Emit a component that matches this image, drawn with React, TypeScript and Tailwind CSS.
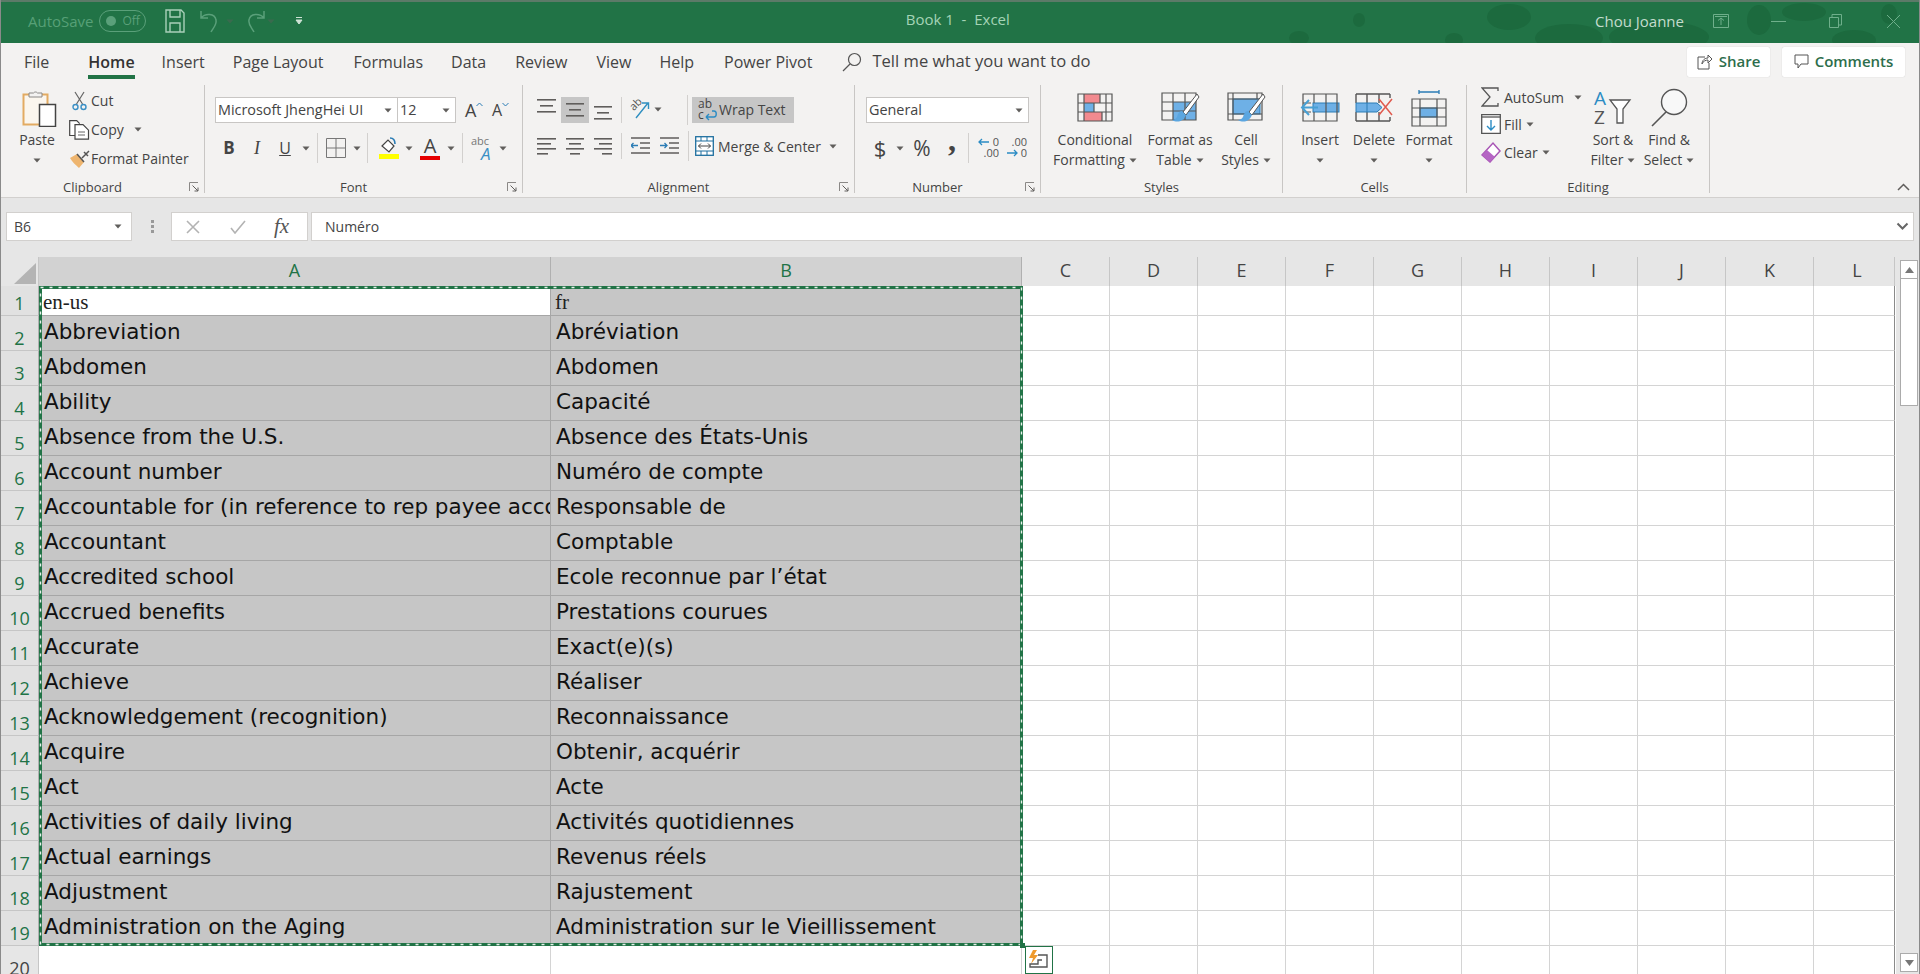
import React from "react";

const rows: [string, string][] = [
  ["Abbreviation", "Abréviation"],
  ["Abdomen", "Abdomen"],
  ["Ability", "Capacité"],
  ["Absence from the U.S.", "Absence des États-Unis"],
  ["Account number", "Numéro de compte"],
  ["Accountable for (in reference to rep payee account)", "Responsable de"],
  ["Accountant", "Comptable"],
  ["Accredited school", "Ecole reconnue par l’état"],
  ["Accrued benefits", "Prestations courues"],
  ["Accurate", "Exact(e)(s)"],
  ["Achieve", "Réaliser"],
  ["Acknowledgement (recognition)", "Reconnaissance"],
  ["Acquire", "Obtenir, acquérir"],
  ["Act", "Acte"],
  ["Activities of daily living", "Activités quotidiennes"],
  ["Actual earnings", "Revenus réels"],
  ["Adjustment", "Rajustement"],
  ["Administration on the Aging", "Administration sur le Vieillissement"],
];
const blankCols = ["C", "D", "E", "F", "G", "H", "I", "J", "K", "L"];

function Caret({ className = "" }: { className?: string }) {
  return (
    <svg width="8" height="5" viewBox="0 0 8 5" className={`shrink-0 ${className}`}>
      <path d="M0.5 0.5h7L4 4.5z" fill="#605e5c" />
    </svg>
  );
}
function Sep({ className = "" }: { className?: string }) {
  return <div className={`w-px shrink-0 bg-[#d2d0ce] ${className}`} />;
}
function VSep() {
  return <div className="mt-[5px] h-[108px] w-px shrink-0 bg-[#c8c6c4]" />;
}
function Launcher() {
  return (
    <svg width="11" height="11" viewBox="0 0 11 11" className="mr-[4px] shrink-0">
      <path d="M0.5 9V0.5H9" stroke="#8a8886" fill="none" />
      <path d="M3.5 3.5L9 9M9 5.5V9H5.5" stroke="#605e5c" fill="none" />
    </svg>
  );
}
function Group({ w, label, launcher, children }: { w: string; label: string; launcher?: boolean; children: React.ReactNode }) {
  return (
    <div className={`${w} flex h-full shrink-0 flex-col`}>
      <div className="mt-[5px] h-[93px]">{children}</div>
      <div className="flex h-[20px] items-center text-[13px] leading-[20px] text-[#444]">
        <div className="flex-1 text-center">{label}</div>
        {launcher ? <div className="flex w-[20px] justify-end"><Launcher /></div> : null}
      </div>
    </div>
  );
}
function BigBtn({ w, icon, l1, l2, className = "" }: { w: string; icon: React.ReactNode; l1: string; l2?: string; className?: string }) {
  return (
    <div className={`${w} ${className} flex shrink-0 flex-col items-center text-[14px] leading-[20px] text-[#444]`}>
      <div className="flex h-[45px] w-full items-center justify-center">{icon}</div>
      <div className="h-[20px] whitespace-nowrap">{l1}</div>
      <div className="flex h-[20px] items-center gap-[4px] whitespace-nowrap">
        {l2 ? <span>{l2}</span> : null}
        <Caret />
      </div>
    </div>
  );
}

function PasteIcon() {
  return (
    <svg width="36" height="38" viewBox="0 0 36 38" className="ml-[5px]">
      <rect x="1.5" y="5.5" width="24" height="30" fill="#fbf6ee" stroke="#e3ab62" strokeWidth="2" />
      <path d="M7 8V4h4.5a2.5 2.5 0 0 1 4 0H20v4z" fill="#f3f2f1" stroke="#8a8886" />
      <rect x="17.5" y="15.5" width="16" height="22" fill="#fff" stroke="#444" strokeWidth="1.5" />
    </svg>
  );
}
function CutIcon() {
  return (
    <svg width="15" height="20" viewBox="0 0 15 20">
      <path d="M3 1l7.5 12M12 1L4.5 13" stroke="#666" strokeWidth="1.2" fill="none" />
      <circle cx="3.5" cy="16" r="2.5" fill="none" stroke="#3a8fc4" strokeWidth="1.4" />
      <circle cx="11.5" cy="16" r="2.5" fill="none" stroke="#3a8fc4" strokeWidth="1.4" />
    </svg>
  );
}
function CopyIcon() {
  return (
    <svg width="21" height="20" viewBox="0 0 21 20">
      <path d="M6 15.5H.7V.7h7l3 3" fill="#fff" stroke="#444" strokeWidth="1.2" />
      <path d="M6 4.7h8l5.5 5.5v9H6z" fill="#fff" stroke="#444" strokeWidth="1.2" />
      <path d="M9 12h7M9 15h7" stroke="#666" />
    </svg>
  );
}
function PainterIcon() {
  return (
    <svg width="22" height="20" viewBox="0 0 22 20">
      <path d="M1 9l7-4 7 8-5 6C7 16 3 13 1 9z" fill="#eeb56f" />
      <path d="M8 5l7 8M13 9l7-7M15 3l4 4" stroke="#555" strokeWidth="1.5" fill="none" />
    </svg>
  );
}
function Lines({ w, ys, widths }: { w: number; ys: number[]; widths?: [number, number][] }) {
  const h = Math.max(...ys) + 2;
  return (
    <svg width={w} height={h} viewBox={`0 0 ${w} ${h}`} className="shrink-0">
      {ys.map((y, i) => {
        const [a, b] = widths ? widths[i] : [0, w];
        return <rect key={i} x={a} y={y} width={b - a} height="1.6" fill="#605e5c" />;
      })}
    </svg>
  );
}
function BordersIcon() {
  return (
    <svg width="20" height="20" viewBox="0 0 20 20">
      <path d="M.5.5h19v19H.5zM10 .5v19M.5 10h19" fill="none" stroke="#777" />
    </svg>
  );
}
function FillIcon() {
  return (
    <svg width="20" height="22" viewBox="0 0 20 22">
      <path d="M3 9l6-6 6 6-5 6z" fill="#fff" stroke="#444" strokeWidth="1.2" />
      <path d="M11 1c3 0 5 2 5 6" stroke="#2b7cb5" strokeWidth="1.6" fill="none" />
      <rect x="0" y="17" width="20" height="5" fill="#ffff00" />
    </svg>
  );
}
function ColorIcon() {
  return (
    <div className="flex h-[24px] w-[20px] flex-col items-center">
      <span className="h-[19px] text-[20px] leading-[20px] text-[#444]">A</span>
      <div className="mt-[1px] h-[5px] w-[20px] bg-[#e60000]" />
    </div>
  );
}
function AbcIcon() {
  return (
    <div className="flex h-[26px] w-[24px] flex-col">
      <span className="h-[12px] text-[11px] leading-[12px] text-[#777]">abc</span>
      <span className="ml-[10px] h-[14px] text-[17px] italic leading-[14px] text-[#3a8fc4]">A</span>
    </div>
  );
}
function OrientIcon() {
  return (
    <div className="relative h-[21px] w-[21px]">
      <span className="absolute -left-[1px] -top-[2px] -rotate-45 text-[11px] leading-[14px] text-[#555]">ab</span>
      <svg width="21" height="21" viewBox="0 0 21 21" className="absolute left-0 top-0">
        <path d="M6 19L18 4M12 4h6.5v6" stroke="#2f8fc0" strokeWidth="1.4" fill="none" />
      </svg>
    </div>
  );
}
function IndentIcon({ right }: { right?: boolean }) {
  return (
    <svg width="19" height="18" viewBox="0 0 19 18">
      <path d="M0 1h19M9 6h10M9 11h10M0 16h19" stroke="#605e5c" strokeWidth="1.4" />
      {right ? (
        <path d="M0 8.5h7M4.5 6l2.5 2.5L4.5 11" stroke="#2b7cb5" fill="none" strokeWidth="1.3" />
      ) : (
        <path d="M7 8.5H0M2.5 6L0 8.5 2.5 11" stroke="#2b7cb5" fill="none" strokeWidth="1.3" />
      )}
    </svg>
  );
}
function WrapIcon() {
  return (
    <div className="relative flex h-[24px] w-[20px] flex-col text-[12px] leading-[11px] text-[#444]">
      <span>ab</span>
      <span>c</span>
      <svg width="13" height="12" viewBox="0 0 13 12" className="absolute bottom-[1px] right-0">
        <path d="M1 8h8c3 0 3-6 0-6H7M1 8l3-3M1 8l3 3" stroke="#2b8cc4" strokeWidth="1.4" fill="none" />
      </svg>
    </div>
  );
}
function MergeIcon() {
  return (
    <svg width="19" height="20" viewBox="0 0 19 20">
      <rect x=".7" y=".7" width="17.6" height="18.6" fill="#fff" stroke="#1f6f9f" strokeWidth="1.3" />
      <path d="M.7 5h17.6M.7 15h17.6M6 .7V5M12 .7V5M6 15v4M12 15v4" stroke="#1f6f9f" />
      <path d="M3.5 10h12M6 7.5L3.5 10 6 12.5M13 7.5l2.5 2.5-2.5 2.5" stroke="#444" fill="none" />
    </svg>
  );
}
function DecIcon({ inc }: { inc?: boolean }) {
  return (
    <div className="relative flex h-[24px] w-[21px] flex-col items-end text-[11px] leading-[11px] text-[#555]">
      <span>{inc ? "0" : ".00"}</span>
      <span>{inc ? ".00" : "0"}</span>
      <svg width="12" height="8" viewBox="0 0 12 8" className={`absolute ${inc ? "left-0 top-[2px]" : "left-0 top-[13px]"}`}>
        {inc ? (
          <path d="M11 4H1M4 1L1 4l3 3" stroke="#2b8cc4" strokeWidth="1.3" fill="none" />
        ) : (
          <path d="M1 4h10M8 1l3 3-3 3" stroke="#2b8cc4" strokeWidth="1.3" fill="none" />
        )}
      </svg>
    </div>
  );
}
const gridStroke = "#555";
function CondIcon() {
  return (
    <svg width="36" height="29" viewBox="0 0 36 29">
      <rect x="7" y="1" width="16" height="9" fill="#f28a8f" />
      <rect x="7" y="10" width="10" height="9" fill="#6eb0e6" />
      <rect x="7" y="19" width="18" height="9" fill="#f28a8f" />
      <path d="M1 1h34v27H1zM1 10h34M1 19h34M7 1v27M23 1v9M17 10v9M25 19v9M29 1v27" fill="none" stroke={gridStroke} strokeWidth="1.2" />
    </svg>
  );
}
function Brush() {
  return (
    <>
      <path d="M36 2L22 20l3 3L38 5z" fill="#fff" stroke="#555" />
      <path d="M21 19c-3 0-4 3-5 6-1 2-3 3-5 3 5 3 11 2 14-5z" fill="#5ba6e0" />
    </>
  );
}
function TableIcon() {
  return (
    <svg width="39" height="31" viewBox="0 0 39 31">
      <rect x="12" y="10" width="23" height="18" fill="#6eb0e6" />
      <path d="M1 1h34v27H1zM1 10h34M1 19h34M12 1v27M24 1v27" fill="none" stroke={gridStroke} strokeWidth="1.2" />
      <Brush />
    </svg>
  );
}
function StylesIcon() {
  return (
    <svg width="39" height="31" viewBox="0 0 39 31">
      <rect x="6" y="7" width="27" height="15" fill="#6eb0e6" stroke="#2b7cb5" />
      <path d="M1 1h34v27H1zM1 7h34M1 22h34M6 1v27M30 1v6" fill="none" stroke={gridStroke} strokeWidth="1.2" />
      <Brush />
    </svg>
  );
}
function InsertIcon() {
  return (
    <svg width="40" height="29" viewBox="0 0 40 29">
      <rect x="13" y="10" width="26" height="9" fill="#6eb0e6" stroke="#2b7cb5" />
      <path d="M3 1h34v27H3zM3 10h8M3 19h8M14 1v9M14 19v9M26 1v27" fill="none" stroke={gridStroke} strokeWidth="1.2" />
      <path d="M18 14.5H2M9 7l-7 7.5L9 22" fill="none" stroke="#47a0d4" strokeWidth="2" />
    </svg>
  );
}
function DeleteIcon() {
  return (
    <svg width="38" height="29" viewBox="0 0 38 29">
      <path d="M1 1h34M1 28h34M1 1v9M1 19v9M12 1v27M24 1v9M24 19v9M35 1v4M35 24v4" fill="none" stroke={gridStroke} strokeWidth="1.4" />
      <path d="M1 10h21l5 4.5-5 4.5H1z" fill="#6eb0e6" stroke="#2b7cb5" />
      <path d="M12 10v9" stroke="#2b7cb5" />
      <path d="M24 6l13 16M37 6L24 22" stroke="#e05a4e" strokeWidth="1.5" />
    </svg>
  );
}
function FormatIcon() {
  return (
    <svg width="37" height="38" viewBox="0 0 37 38">
      <path d="M8 3h20M8 1v4M28 1v4" stroke="#2b7cb5" strokeWidth="1.3" fill="none" />
      <rect x="9" y="19" width="17" height="9" fill="#6eb0e6" stroke="#2b7cb5" />
      <path d="M1 10h34v27H1zM1 19h34M1 28h34M9 10v27M26 10v27" fill="none" stroke={gridStroke} strokeWidth="1.2" />
    </svg>
  );
}
function SortIcon() {
  return (
    <div className="flex h-[38px] w-[38px]">
      <div className="flex w-[14px] flex-col text-[19px] leading-[19px]">
        <span className="text-[#2b8cc4]">A</span>
        <span className="text-[#555]">Z</span>
      </div>
      <svg width="24" height="30" viewBox="0 0 24 30" className="mt-[8px]">
        <path d="M2 3h20l-7 9v14H9V12z" fill="#fff" stroke="#555" strokeWidth="1.3" />
      </svg>
    </div>
  );
}
function FindIcon() {
  return (
    <svg width="38" height="40" viewBox="0 0 38 40">
      <circle cx="24" cy="14" r="12.5" fill="#f8f8f8" stroke="#555" strokeWidth="1.4" />
      <path d="M16 24L2 38" stroke="#555" strokeWidth="1.6" />
    </svg>
  );
}

function TopBar() {
  return (
    <div className="relative flex h-[43px] shrink-0 items-center overflow-hidden border-t-[2px] border-[#5c7a68] bg-[#217346]">
      <svg width="640" height="41" viewBox="0 0 640 41" className="absolute right-0 top-0">
        <g fill="#1c6a3e">
          <ellipse cx="80" cy="18" rx="6" ry="7" />
          <ellipse cx="230" cy="15" rx="22" ry="13" />
          <ellipse cx="290" cy="36" rx="34" ry="14" />
          <ellipse cx="380" cy="35" rx="50" ry="16" />
          <ellipse cx="480" cy="18" rx="12" ry="15" />
          <ellipse cx="525" cy="10" rx="22" ry="9" />
          <ellipse cx="575" cy="38" rx="22" ry="10" />
          <ellipse cx="610" cy="12" rx="8" ry="10" />
          <ellipse cx="175" cy="38" rx="9" ry="7" />
          <ellipse cx="20" cy="36" rx="10" ry="7" />
        </g>
      </svg>
      <div className="relative flex h-full w-full items-center pb-[3px]">
        <span className="ml-[27px] text-[15px] text-[#57a077]">AutoSave</span>
        <div className="ml-[5px] flex h-[22px] w-[47px] items-center rounded-full border border-[#5aa07a]">
          <div className="ml-[6px] h-[10px] w-[10px] rounded-full bg-[#5aa07a]" />
          <span className="ml-[7px] text-[12px] text-[#5aa07a]">Off</span>
        </div>
        <svg width="20" height="24" viewBox="0 0 20 24" className="ml-[19px]">
          <path d="M1 1h15l3 3v19H1zM5 1v7h10V1M5 23v-9h10v9" fill="none" stroke="#a9d0b9" strokeWidth="1.4" />
        </svg>
        <svg width="26" height="26" viewBox="0 0 26 26" className="ml-[14px]">
          <path d="M2 3v7h7M2 10c4-5 14-5 15 2 1 5-3 8-5 12" fill="none" stroke="#5aa07a" strokeWidth="1.5" />
        </svg>
        <Caret className="ml-[1px] opacity-40" />
        <svg width="26" height="26" viewBox="0 0 26 26" className="ml-[6px]">
          <path d="M24 3v7h-7M24 10c-4-5-14-5-15 2-1 5 3 8 5 12" fill="none" stroke="#5aa07a" strokeWidth="1.5" />
        </svg>
        <Caret className="ml-[1px] opacity-40" />
        <svg width="8" height="10" viewBox="0 0 8 10" className="ml-[20px]">
          <path d="M1 1.5h6M1 4h6L4 8z" stroke="#cfe3d6" fill="#cfe3d6" />
        </svg>
        <div className="mb-[3px] flex-1 pl-[18px] text-center text-[15px] text-[#a4d4b6]">Book 1&nbsp; -&nbsp; Excel</div>
        <span className="text-[15px] text-[#c4dccd]">Chou Joanne</span>
        <svg width="16" height="14" viewBox="0 0 16 14" className="ml-[29px]">
          <path d="M.5.5h15v13H.5zM8 11V4M5 6.5L8 4l3 2.5M2 2.5h12" fill="none" stroke="#6faf8b" />
        </svg>
        <div className="ml-[42px] h-px w-[15px] bg-[#6faf8b]" />
        <svg width="13" height="14" viewBox="0 0 13 14" className="ml-[43px]">
          <path d="M.5 3.5h9v10h-9zM3 3V.5h9.5V11H10" fill="none" stroke="#6faf8b" />
        </svg>
        <svg width="15" height="15" viewBox="0 0 15 15" className="ml-[44px] mr-[18px]">
          <path d="M1 1l13 13M14 1L1 14" stroke="#6faf8b" />
        </svg>
      </div>
    </div>
  );
}

function Tabs() {
  return (
    <div className="flex h-[37px] shrink-0 items-center bg-[#f3f2f1] text-[16px] text-[#444]">
      <span className="ml-[23px]">File</span>
      <div className="relative ml-[39px] flex h-[37px] items-center font-semibold text-[#333]">
        Home
        <div className="absolute bottom-[1px] left-0 right-0 h-[4px] bg-[#217346]" />
      </div>
      <span className="ml-[27px]">Insert</span>
      <span className="ml-[28px]">Page Layout</span>
      <span className="ml-[30px]">Formulas</span>
      <span className="ml-[28px]">Data</span>
      <span className="ml-[29px]">Review</span>
      <span className="ml-[29px]">View</span>
      <span className="ml-[28px]">Help</span>
      <span className="ml-[30px]">Power Pivot</span>
      <svg width="20" height="20" viewBox="0 0 20 20" className="ml-[30px]">
        <circle cx="12.5" cy="7.5" r="6" fill="none" stroke="#555" strokeWidth="1.2" />
        <path d="M8 12l-7 7" stroke="#555" strokeWidth="1.2" />
      </svg>
      <span className="ml-[10px] text-[16.6px]">Tell me what you want to do</span>
      <div className="ml-auto flex h-[30px] w-[83px] items-center justify-center gap-[6px] rounded-[2px] bg-white text-[15px] font-semibold text-[#2d6e4c] shadow-[0_0_1px_#bbb]">
        <svg width="16" height="16" viewBox="0 0 16 16">
          <path d="M8 3H1v12h11V9M5 10c0-4 3-6 6-6V1l4 4-4 4V6c-2 0-5 1-6 4z" fill="none" stroke="#555" />
        </svg>
        Share
      </div>
      <div className="ml-[12px] mr-[14px] flex h-[30px] w-[123px] items-center justify-center gap-[6px] rounded-[2px] bg-white text-[15px] font-semibold text-[#2d6e4c] shadow-[0_0_1px_#bbb]">
        <svg width="15" height="15" viewBox="0 0 15 15">
          <path d="M1 1h13v9H7l-3 4v-4H1z" fill="none" stroke="#555" />
        </svg>
        Comments
      </div>
    </div>
  );
}

function SmallRow({ icon, text, caret }: { icon: React.ReactNode; text: string; caret?: boolean }) {
  return (
    <div className="flex h-[29px] items-center whitespace-nowrap text-[14px] text-[#444]">
      <div className="flex w-[23px] justify-center">{icon}</div>
      <span>{text}</span>
      {caret ? <Caret className="ml-[10px]" /> : null}
    </div>
  );
}
function Combo({ w, text, className = "" }: { w: string; text: string; className?: string }) {
  return (
    <div className={`${w} ${className} flex h-[26px] items-center justify-between border border-[#c8c6c4] bg-white pl-[2px] pr-[5px] text-[14.4px] text-[#444]`}>
      <span className="whitespace-nowrap">{text}</span>
      <Caret />
    </div>
  );
}

function Ribbon() {
  return (
    <div className="flex h-[118px] shrink-0 border-b border-[#d2d0ce] bg-[#f3f2f1]">
      <Group w="w-[203px]" label="Clipboard" launcher>
        <div className="flex">
          <BigBtn w="w-[68px]" className="ml-[2px]" icon={<PasteIcon />} l1="Paste" />
          <div className="-ml-[3px] pt-[1px]">
            <SmallRow icon={<CutIcon />} text="Cut" />
            <SmallRow icon={<CopyIcon />} text="Copy" caret />
            <SmallRow icon={<PainterIcon />} text="Format Painter" />
          </div>
        </div>
      </Group>
      <VSep />
      <Group w="w-[317px]" label="Font" launcher>
        <div className="pl-[10px] pt-[12px]">
          <div className="flex h-[26px] items-center text-[#444]">
            <Combo w="w-[183px]" text="Microsoft JhengHei UI" />
            <Combo w="w-[59px]" text="12" className="-ml-px" />
            <div className="ml-[9px] flex w-[18px] items-start">
              <span className="text-[18px] leading-[22px]">A</span>
              <svg width="7" height="5" viewBox="0 0 7 5" className="mt-[3px] shrink-0"><path d="M.5 4L3.5 1l3 3" stroke="#2b7cb5" fill="none" /></svg>
            </div>
            <div className="ml-[9px] flex w-[18px] items-start">
              <span className="text-[16px] leading-[22px]">A</span>
              <svg width="7" height="5" viewBox="0 0 7 5" className="mt-[3px] shrink-0"><path d="M.5 1L3.5 4l3-3" stroke="#2b7cb5" fill="none" /></svg>
            </div>
          </div>
          <div className="mt-[12px] flex h-[26px] items-center text-[#444]">
            <div className="ml-[4px] w-[20px] text-center text-[17px] font-bold">B</div>
            <div className="ml-[8px] w-[20px] text-center font-[Liberation_Serif,serif] text-[18px] italic">I</div>
            <div className="ml-[8px] w-[20px] text-center text-[16px] underline">U</div>
            <Caret className="ml-[7px]" />
            <Sep className="ml-[7px] h-[30px]" />
            <div className="ml-[8px]"><BordersIcon /></div>
            <Caret className="ml-[7px]" />
            <Sep className="ml-[6px] h-[30px]" />
            <div className="ml-[11px]"><FillIcon /></div>
            <Caret className="ml-[6px]" />
            <div className="ml-[7px]"><ColorIcon /></div>
            <Caret className="ml-[7px]" />
            <Sep className="ml-[7px] h-[30px]" />
            <div className="ml-[8px]"><AbcIcon /></div>
            <Caret className="ml-[4px]" />
          </div>
        </div>
      </Group>
      <VSep />
      <Group w="w-[331px]" label="Alignment" launcher>
        <div className="pl-[14px] pt-[11px]">
          <div className="flex h-[27px] items-center">
            <div className="flex h-[26px] w-[20px] items-start pt-[2px]"><Lines w={19} ys={[0, 6, 12]} widths={[[0, 19], [3, 16], [0, 19]]} /></div>
            <div className="ml-[4px] flex h-[26px] w-[28px] items-center justify-center bg-[#c6c6c6]"><Lines w={18} ys={[0, 6, 12]} widths={[[0, 18], [3, 15], [0, 18]]} /></div>
            <div className="ml-[5px] flex h-[26px] w-[18px] items-end pb-[3px]"><Lines w={18} ys={[0, 6, 12]} widths={[[0, 18], [3, 15], [0, 18]]} /></div>
            <Sep className="ml-[9px] h-[26px]" />
            <div className="ml-[8px]"><OrientIcon /></div>
            <Caret className="ml-[3px]" />
            <Sep className="ml-[25px] h-[30px]" />
            <div className="ml-[4px] flex h-[26px] w-[102px] items-center gap-[1px] bg-[#c6c6c6] pl-[6px] text-[14px] text-[#444]">
              <WrapIcon />
              <span>Wrap Text</span>
            </div>
          </div>
          <div className="mt-[10px] flex h-[26px] items-center">
            <Lines w={19} ys={[0, 5, 10, 15]} widths={[[0, 19], [0, 14], [0, 19], [0, 11]]} />
            <div className="ml-[10px]"><Lines w={18} ys={[0, 5, 10, 15]} widths={[[0, 18], [3, 15], [0, 18], [4, 14]]} /></div>
            <div className="ml-[10px]"><Lines w={18} ys={[0, 5, 10, 15]} widths={[[0, 18], [5, 18], [0, 18], [8, 18]]} /></div>
            <Sep className="ml-[9px] h-[26px]" />
            <div className="ml-[9px]"><IndentIcon /></div>
            <div className="ml-[10px]"><IndentIcon right /></div>
            <Sep className="ml-[9px] h-[30px]" />
            <div className="ml-[6px] shrink-0"><MergeIcon /></div>
            <span className="ml-[4px] whitespace-nowrap text-[14px] text-[#444]">Merge &amp; Center</span>
            <Caret className="ml-[8px]" />
          </div>
        </div>
      </Group>
      <VSep />
      <Group w="w-[185px]" label="Number" launcher>
        <div className="pl-[11px] pt-[12px]">
          <Combo w="w-[163px]" text="General" />
          <div className="mt-[12px] flex h-[26px] items-center text-[#444]">
            <span className="ml-[7px] w-[14px] text-center text-[22px] leading-[26px]">$</span>
            <Caret className="ml-[9px]" />
            <span className="ml-[6px] w-[24px] text-center text-[21px] leading-[26px]">%</span>
            <span className="ml-[13px] w-[10px] -translate-y-[8px] text-center font-[Liberation_Serif,serif] text-[32px] font-bold leading-[22px]">,</span>
            <Sep className="ml-[11px] h-[30px]" />
            <div className="ml-[9px]"><DecIcon inc /></div>
            <div className="ml-[7px]"><DecIcon /></div>
          </div>
        </div>
      </Group>
      <VSep />
      <Group w="w-[241px]" label="Styles">
        <div className="flex pl-[6px]">
          <BigBtn w="w-[96px]" icon={<CondIcon />} l1="Conditional" l2="Formatting" />
          <BigBtn w="w-[70px]" className="ml-[2px]" icon={<TableIcon />} l1="Format as" l2="Table" />
          <BigBtn w="w-[62px]" icon={<StylesIcon />} l1="Cell" l2="Styles" />
        </div>
      </Group>
      <VSep />
      <Group w="w-[183px]" label="Cells">
        <div className="flex pl-[10px]">
          <BigBtn w="w-[54px]" icon={<InsertIcon />} l1="Insert" />
          <BigBtn w="w-[54px]" icon={<DeleteIcon />} l1="Delete" />
          <BigBtn w="w-[56px]" icon={<FormatIcon />} l1="Format" />
        </div>
      </Group>
      <VSep />
      <Group w="w-[242px]" label="Editing">
        <div className="flex">
          <div className="-mt-[1px] w-[119px] pl-[14px] text-[14px] text-[#444]">
            <div className="flex h-[26px] items-center">
              <svg width="19" height="20" viewBox="0 0 19 20" className="shrink-0"><path d="M17 4V1H1l8 9-8 9h16v-3" fill="none" stroke="#555" strokeWidth="1.3" /></svg>
              <span className="ml-[4px]">AutoSum</span>
              <Caret className="ml-[10px]" />
            </div>
            <div className="flex h-[28px] items-center">
              <svg width="20" height="20" viewBox="0 0 20 20" className="shrink-0">
                <path d="M.7.7h18.6v18.6H.7z" fill="#fff" stroke="#555" strokeWidth="1.3" />
                <path d="M.7 3h18.6" stroke="#555" strokeWidth="1.3" />
                <path d="M10 6v10M6 12l4 4 4-4" stroke="#2b8cc4" strokeWidth="1.4" fill="none" />
              </svg>
              <span className="ml-[3px]">Fill</span>
              <Caret className="ml-[4px]" />
            </div>
            <div className="flex h-[28px] items-center">
              <svg width="20" height="22" viewBox="0 0 20 22" className="shrink-0">
                <path d="M1 14L12 2l7 8L9 21z" fill="#fff" stroke="#a855b5" strokeWidth="1.5" />
                <path d="M1 14l5-5 8 7-5 5z" fill="#b565c4" />
              </svg>
              <span className="ml-[3px]">Clear</span>
              <Caret className="ml-[4px]" />
            </div>
          </div>
          <BigBtn w="w-[54px]" icon={<SortIcon />} l1="Sort &" l2="Filter" />
          <BigBtn w="w-[58px]" icon={<FindIcon />} l1="Find &" l2="Select" />
        </div>
      </Group>
      <VSep />
      <div className="flex flex-1 items-end justify-end pb-[6px] pr-[9px]">
        <svg width="13" height="8" viewBox="0 0 13 8"><path d="M1 7l5.5-5.5L12 7" fill="none" stroke="#605e5c" strokeWidth="1.5" /></svg>
      </div>
    </div>
  );
}

function FormulaBar() {
  return (
    <div className="flex h-[59px] shrink-0 bg-[#e6e6e6] pt-[14px]">
      <div className="ml-[5px] flex h-[29px] w-[126px] items-center justify-between border border-[#d2d0ce] bg-white pl-[7px] pr-[9px] text-[14px] text-[#444]">
        B6
        <Caret />
      </div>
      <div className="ml-[18px] flex h-[29px] w-[4px] flex-col items-center justify-center gap-[2px]">
        <div className="h-[3px] w-[3px] bg-[#999]" />
        <div className="h-[3px] w-[3px] bg-[#999]" />
        <div className="h-[3px] w-[3px] bg-[#999]" />
      </div>
      <div className="ml-[17px] flex h-[29px] w-[137px] items-center border border-[#d2d0ce] bg-white">
        <svg width="14" height="14" viewBox="0 0 14 14" className="ml-[14px]"><path d="M1 1l12 12M13 1L1 13" stroke="#b3b3b3" strokeWidth="1.6" /></svg>
        <svg width="16" height="14" viewBox="0 0 16 14" className="ml-[30px]"><path d="M1 8l4 5L15 1" stroke="#b3b3b3" strokeWidth="1.6" fill="none" /></svg>
        <span className="ml-[28px] font-[Liberation_Serif,serif] text-[21px] italic text-[#555]">fx</span>
      </div>
      <div className="ml-[3px] flex h-[29px] w-[1603px] items-center justify-between border border-[#d2d0ce] bg-white pl-[13px] pr-[4px] text-[14px] text-[#444]">
        Numéro
        <svg width="13" height="9" viewBox="0 0 13 9"><path d="M1.5 1.5l5 5 5-5" fill="none" stroke="#666" strokeWidth="2" /></svg>
      </div>
    </div>
  );
}

function Sheet() {
  return (
    <div className="flex min-h-0 flex-1 bg-[#e6e6e6]">
      <div className="w-[1895px] shrink-0">
        <div className="flex h-[29px] text-[18px] leading-[27px]">
          <div className="flex w-[38px] shrink-0 items-end justify-end border-r border-[#c6c6c6] pb-[2px] pr-[2px]">
            <svg width="22" height="21" viewBox="0 0 22 21"><path d="M22 0v21H0z" fill="#b4b4b4" /></svg>
          </div>
          <div className="w-[512px] shrink-0 border-r border-[#b0b0b0] bg-[#d2d2d2] text-center text-[#217346]">A</div>
          <div className="w-[471px] shrink-0 border-r border-[#b0b0b0] bg-[#d2d2d2] text-center text-[#217346]">B</div>
          {blankCols.map((c) => (
            <div key={c} className={`${c === "L" ? "w-[81px] pl-[6px]" : "w-[88px]"} shrink-0 border-r border-[#c6c6c6] text-center text-[#444]`}>{c}</div>
          ))}
        </div>
        <div className="relative bg-white">
          <RowLine n={1} a="en-us" b="fr" first />
          {rows.map((r, i) => (
            <RowLine key={i} n={i + 2} a={r[0]} b={r[1]} />
          ))}
          <div className="flex h-[28px]">
            <div className="flex w-[38px] shrink-0 justify-center overflow-hidden border-r border-[#c6c6c6] bg-[#e6e6e6] pt-[12px] text-[18px] leading-[20px] text-[#444]">20</div>
            <div className="w-[512px] shrink-0 border-r border-[#d4d4d4]" />
            <div className="w-[471px] shrink-0 border-r border-[#d4d4d4]" />
            {blankCols.map((c) => (
              <div key={c} className={`${c === "L" ? "w-[81px] border-r-[#8a8a8a]" : "w-[88px] border-r-[#d4d4d4]"} shrink-0 border-r`} />
            ))}
          </div>
          <div className="absolute left-[38px] top-0 h-[660px] w-[984px]">
            <svg width="984" height="660" viewBox="0 0 984 660">
              <rect x="1.5" y="1.5" width="981" height="657" fill="none" stroke="#217346" strokeWidth="3" />
              <rect x="1.5" y="1.5" width="981" height="657" fill="none" stroke="#e6f0ea" strokeWidth="1.4" strokeDasharray="3 6" />
            </svg>
            <div className="absolute -bottom-[2px] -right-[2px] h-[5px] w-[5px] bg-[#217346]" />
          </div>
          <div className="absolute left-[1024px] top-[660px] flex h-[28px] w-[28px] items-center justify-center border border-[#217346] bg-white">
            <svg width="22" height="22" viewBox="0 0 22 22">
              <path d="M5 1L1 9h4l-2 6 7-9H6l3-5z" fill="#ef9a2d" />
              <path d="M10 6h9v12H2v-3h8V11h4M6 15" fill="none" stroke="#555" strokeWidth="1.4" />
            </svg>
          </div>
        </div>
      </div>
      <div className="ml-[4px] flex w-[18px] shrink-0 flex-col bg-[#e6e6e6] pt-[3px]">
        <div className="flex h-[19px] items-center justify-center border border-[#ababab] bg-white">
          <svg width="9" height="6" viewBox="0 0 9 6"><path d="M0 6l4.5-6L9 6z" fill="#777" /></svg>
        </div>
        <div className="h-[127px] border-x border-b border-[#ababab] bg-white" />
        <div className="flex-1" />
        <div className="mb-[2px] flex h-[19px] items-center justify-center border border-[#ababab] bg-white">
          <svg width="9" height="6" viewBox="0 0 9 6"><path d="M0 0l4.5 6L9 0z" fill="#777" /></svg>
        </div>
      </div>
    </div>
  );
}

function RowLine({ n, a, b, first }: { n: number; a: string; b: string; first?: boolean }) {
  const h = first ? "h-[30px]" : "h-[35px]";
  const serif = "font-[Liberation_Serif,serif] text-[21px] leading-[26px] text-[#222] items-end pl-[4px] pt-[3px]";
  const body = "[font-family:DejaVu_Sans,sans-serif] text-[21.5px] leading-[30px] text-[#111] items-center pl-[5px] pb-[2px]";
  return (
    <div className={`flex ${h}`}>
      <div className="flex w-[38px] shrink-0 items-end justify-center border-b border-r border-b-[#c6c6c6] border-r-[#b0b0b0] bg-[#e1e1e1] pb-[2px] text-[18px] leading-[20px] text-[#217346]">{n}</div>
      <div className={`flex w-[512px] shrink-0 overflow-hidden whitespace-nowrap border-b border-r border-[#a6a6a6] ${first ? `bg-white ${serif}` : `bg-[#c6c6c6] ${body}`}`}>{a}</div>
      <div className={`flex w-[471px] shrink-0 overflow-hidden whitespace-nowrap border-b border-r border-[#a6a6a6] bg-[#c6c6c6] ${first ? serif : body}`}>{b}</div>
      {blankCols.map((c) => (
        <div key={c} className={`${c === "L" ? "w-[81px] border-r-[#8a8a8a]" : "w-[88px] border-r-[#d4d4d4]"} shrink-0 border-b border-r border-b-[#d4d4d4]`} />
      ))}
    </div>
  );
}

export default function App() {
  return (
    <div className="flex h-[974px] w-[1920px] flex-col overflow-hidden border-x border-[#8a8a8a] bg-white [font-family:Open_Sans,sans-serif]">
      <TopBar />
      <Tabs />
      <Ribbon />
      <FormulaBar />
      <Sheet />
    </div>
  );
}
